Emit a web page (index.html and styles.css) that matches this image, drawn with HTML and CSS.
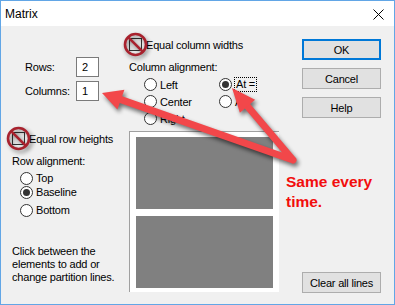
FILE: index.html
```html
<!DOCTYPE html>
<html lang="en">
<head>
    <meta charset="UTF-8" />
    <title>Matrix</title>
    <link rel="stylesheet" href="styles.css">
</head>
<body>
    <div class="window">
        <div class="titlebar">
            <span class="title">Matrix</span>
            <svg class="close" width="11" height="11" viewBox="0 0 11 11">
                <path d="M0.5 0.5 L10.5 10.5 M10.5 0.5 L0.5 10.5" stroke="#000" stroke-width="1" />
            </svg>
        </div>

        <div class="content">
            <div class="col-left">
                <div class="field field-first">
                    <span class="field-label">Rows:</span>
                    <span class="input">2</span>
                </div>
                <div class="field">
                    <span class="field-label">Columns:</span>
                    <span class="input">1</span>
                </div>

                <div class="check check-rows">
                    <span class="box"></span>
                    <span>Equal row heights</span>
                </div>

                <div class="group-label">Row alignment:</div>
                <div class="radio radio-top"><span class="dot"></span><span>Top</span></div>
                <div class="radio"><span class="dot on"></span><span>Baseline</span></div>
                <div class="radio radio-bottom"><span class="dot"></span><span>Bottom</span></div>

                <p class="hint">Click between the<br>elements to add or<br>change partition lines.</p>
            </div>

            <div class="col-mid">
                <div class="check check-cols">
                    <span class="box"></span>
                    <span>Equal column widths</span>
                </div>

                <div class="group-label">Column alignment:</div>
                <div class="radio-grid">
                    <div class="radio"><span class="dot"></span><span>Left</span></div>
                    <div class="radio"><span class="dot on"></span><span class="focus">At =</span></div>
                    <div class="radio"><span class="dot"></span><span>Center</span></div>
                    <div class="radio"><span class="dot"></span><span>At .</span></div>
                    <div class="radio"><span class="dot"></span><span>Right</span></div>
                </div>

                <div class="preview">
                    <div class="cell"></div>
                    <div class="cell"></div>
                </div>
            </div>

            <div class="col-right">
                <button class="btn btn-default">OK</button>
                <button class="btn">Cancel</button>
                <button class="btn">Help</button>
                <button class="btn btn-clear">Clear all lines</button>
            </div>
        </div>

        <!-- annotations drawn on top of the dialog -->
        <div class="note">Same every<br>time.</div>

        <svg class="overlay" width="395" height="305" viewBox="0 0 395 305">
            <defs>
                <filter id="blur" x="-20%" y="-20%" width="140%" height="140%">
                    <feGaussianBlur stdDeviation="2" />
                </filter>
                <g id="arrows">
                    <path d="M293 160 L121 99.6 M293 160 L247.5 106.3" stroke="currentColor" stroke-width="7" stroke-linecap="round" fill="none" />
                    <polygon points="102,93 124.4,89.7 117.4,109.5" fill="currentColor" />
                    <polygon points="232,88 255.1,99.8 239.9,112.8" fill="currentColor" />
                </g>
                <g id="nosign">
                    <circle cx="0" cy="0" r="10.5" stroke="currentColor" stroke-width="2.6" fill="none" />
                    <path d="M-7.4 -7.4 L7.4 7.4" stroke="currentColor" stroke-width="2.6" />
                </g>
            </defs>

            <g filter="url(#blur)" opacity="0.45" color="#000">
                <use href="#nosign" x="137" y="47" />
                <use href="#nosign" x="21" y="141" />
            </g>
            <g color="#a8222e">
                <use href="#nosign" x="135.5" y="44.5" />
                <use href="#nosign" x="18.5" y="138.5" />
            </g>

            <g filter="url(#blur)" opacity="0.55" color="#000">
                <use href="#arrows" x="2" y="3" />
            </g>
            <g color="#f2474a">
                <use href="#arrows" />
            </g>
        </svg>
    </div>
</body>
</html>
```

FILE: styles.css
```css
* {
    box-sizing: border-box;
}

body {
    margin: 0;
    background: #fff;
    font-family: "Liberation Sans", Arial, sans-serif;
    font-size: 11px;
    letter-spacing: -0.2px;
    color: #000;
}

.window {
    position: relative;
    width: 395px;
    height: 305px;
    border: 1px solid #62a6e6;
    background: #f0f0f0;
    display: flex;
    flex-direction: column;
}

.titlebar {
    height: 25px;
    background: #fff;
    display: flex;
    align-items: center;
    justify-content: space-between;
    padding: 0 10px 0 4px;
}

.title {
    font-size: 12px;
    letter-spacing: 0;
}

.close {
    display: block;
    margin-top: 1px;
}

.content {
    flex: 1;
    display: flex;
    padding: 0 0 11px 11px;
}

/* левая колонка */
.col-left {
    width: 117px;
    display: flex;
    flex-direction: column;
}

.field {
    display: flex;
    align-items: center;
    height: 20px;
    margin-top: 4px;
    padding-left: 13px;
}

.field-first {
    margin-top: 31px;
}

.field-label {
    width: 51px;
}

.input {
    width: 23px;
    height: 20px;
    background: #fff;
    border: 1px solid #7a7a7a;
    padding-left: 5px;
    line-height: 18px;
}

.check {
    display: flex;
    align-items: center;
    height: 13px;
    gap: 4px;
}

.check-rows {
    margin-top: 31px;
}

.check-cols {
    margin-top: 12px;
}

.box {
    width: 13px;
    height: 13px;
    border: 1px solid #333;
    background: #e6e6e6;
}

.group-label {
    height: 14px;
    line-height: 14px;
    margin-top: 9px;
}

.radio {
    display: flex;
    align-items: center;
    gap: 3px;
    height: 14px;
    padding-left: 8px;
}

.radio-top {
    margin-top: 3px;
}

.radio-bottom {
    margin-top: 4px;
}

.dot {
    position: relative;
    width: 13px;
    height: 13px;
    border: 1px solid #333;
    border-radius: 50%;
    background: #fff;
    flex: none;
}

.dot.on::after {
    content: "";
    position: absolute;
    left: 2px;
    top: 2px;
    width: 7px;
    height: 7px;
    border-radius: 50%;
    background: #333;
}

.hint {
    margin: 28px 0 0;
    line-height: 13px;
}

/* средняя колонка */
.col-mid {
    width: 150px;
    display: flex;
    flex-direction: column;
}

.radio-grid {
    display: grid;
    grid-template-columns: 75px 75px;
    grid-auto-rows: 17px;
    margin-top: 2px;
}

.radio-grid .radio {
    height: 17px;
    padding-left: 15px;
}

.focus {
    outline: 1px dotted #000;
    outline-offset: 0;
    padding: 0 1px;
    line-height: 13px;
}

.preview {
    margin-top: 4px;
    width: 150px;
    height: 161px;
    background: #fff;
    border-top: 1px solid #a0a0a0;
    border-left: 1px solid #a0a0a0;
    padding: 5px 6px 4px 6px;
    display: flex;
    flex-direction: column;
    gap: 7px;
}

.cell {
    height: 72px;
    background: #808080;
}

/* кнопки */
.col-right {
    width: 79px;
    margin-left: 23px;
    display: flex;
    flex-direction: column;
}

.btn {
    height: 21px;
    margin-top: 8px;
    padding: 0;
    background: #e1e1e1;
    border: 1px solid #adadad;
    font-family: inherit;
    font-size: inherit;
    letter-spacing: inherit;
    color: #000;
}

.btn-default {
    margin-top: 13px;
    border: 2px solid #0078d7;
}

.btn-clear {
    margin-top: auto;
}

.note {
    position: absolute;
    left: 285px;
    top: 171px;
    font-size: 15.5px;
    font-weight: bold;
    letter-spacing: 0;
    line-height: 20px;
    color: #f20d0d;
}

.overlay {
    position: absolute;
    left: -1px;
    top: -1px;
    pointer-events: none;
}
```
